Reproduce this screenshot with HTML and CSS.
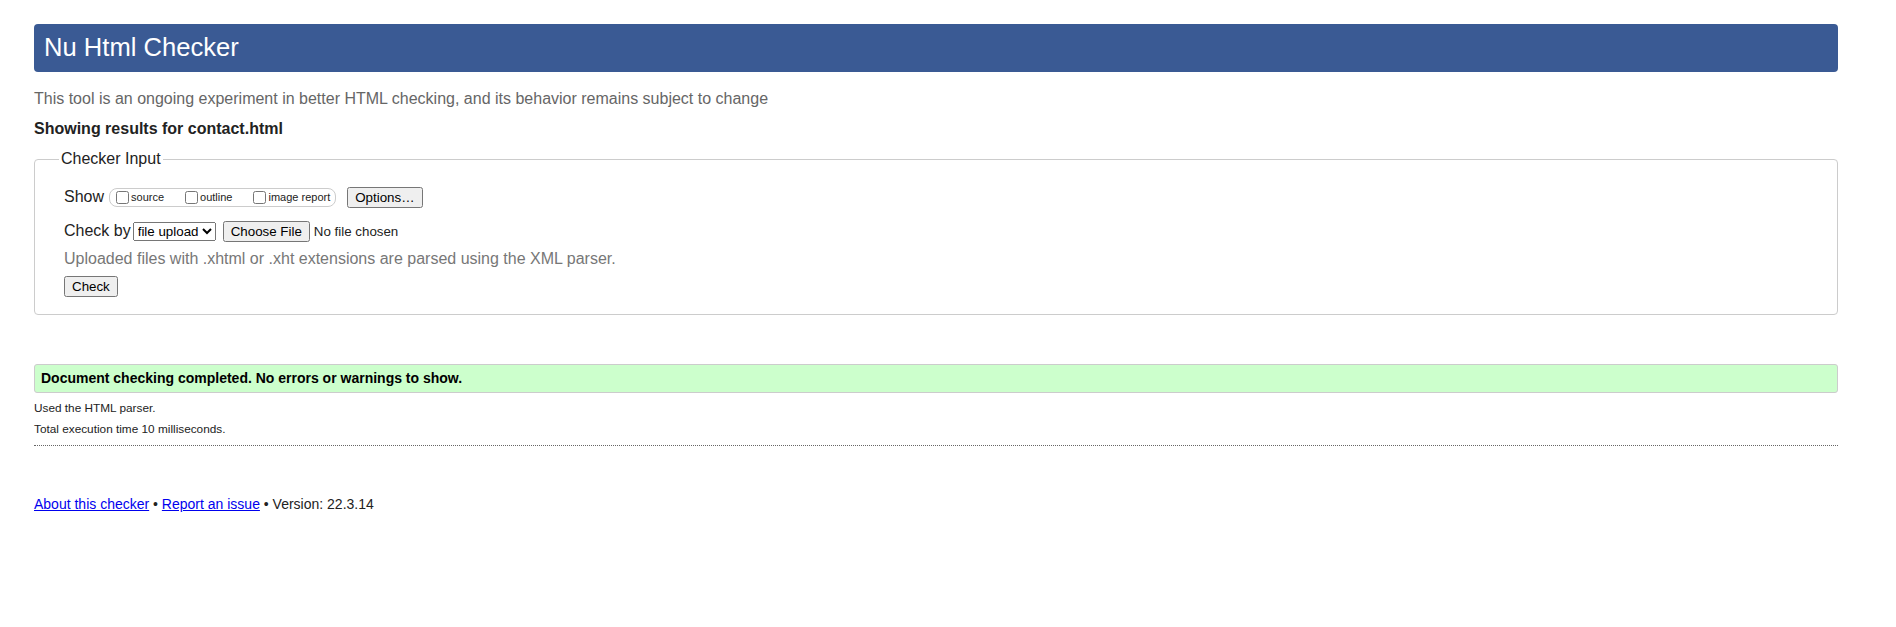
FILE: index.html
```html
<!DOCTYPE html>
<html lang="en">
<head>
<meta charset="utf-8">
<title>Showing results for contact.html - Nu Html Checker</title>
<link rel="stylesheet" href="styles.css">
</head>
<body>
<div class="page">
  <h1 class="title">Nu Html Checker</h1>
  <p class="tagline">This tool is an ongoing experiment in better HTML checking, and its behavior remains subject to change</p>
  <h2 class="results-for">Showing results for contact.html</h2>
  <fieldset class="checker-input">
    <legend class="legend">Checker Input</legend>
    <div class="inner">
      <div class="row show-row">
        <span class="row-label">Show</span>
        <span class="extras">
          <label class="extra"><input type="checkbox" class="cb">source</label>
          <label class="extra"><input type="checkbox" class="cb">outline</label>
          <label class="extra last"><input type="checkbox" class="cb">image report</label>
        </span>
        <button type="button" class="btn options">Options…</button>
      </div>
      <div class="row checkby-row">
        <span class="row-label">Check by</span>
        <select class="method"><option>file upload</option></select>
        <input type="file" class="file">
      </div>
      <p class="hint">Uploaded files with .xhtml or .xht extensions are parsed using the XML parser.</p>
      <div class="row submit-row">
        <button type="button" class="btn">Check</button>
      </div>
    </div>
  </fieldset>
  <div class="success">Document checking completed. No errors or warnings to show.</div>
  <p class="details first">Used the HTML parser.</p>
  <p class="details">Total execution time 10 milliseconds.</p>
  <hr class="divider">
  <p class="footer"><a href="#about" class="link">About this checker</a> • <a href="#issue" class="link">Report an issue</a> • Version: 22.3.14</p>
</div>
</body>
</html>
```

FILE: styles.css
```css
html {
  background: #fff;
}
body {
  margin: 0;
  font-family: "Liberation Sans", Arial, sans-serif;
  color: #222;
}
.page {
  padding: 24px 58px 0 34px;
}
.title {
  margin: 0;
  height: 48px;
  line-height: 46px;
  padding: 0 10px;
  font-size: 25.6px;
  font-weight: normal;
  color: #fff;
  background: #3a5a94;
  border-radius: 4px;
}
.tagline {
  margin: 15px 0 0;
  font-size: 16px;
  line-height: 24px;
  color: #666;
}
.results-for {
  margin: 6px 0 0;
  font-size: 16px;
  line-height: 24px;
  font-weight: bold;
  color: #222;
}
.checker-input {
  margin: 9px 0 0;
  padding: 14px 24px 17px;
  border: 1px solid #ccc;
  border-radius: 4px;
  min-width: 0;
}
.legend {
  padding: 0 2px;
  font-size: 16px;
  color: #222;
}
.inner {
  padding-left: 5px;
}
.row {
  display: flex;
  align-items: center;
}
.row-label {
  font-size: 16px;
  margin-right: 2px;
}
.show-row .row-label {
  margin-right: 5px;
}
.show-row {
  height: 30px;
}
.extras {
  display: inline-flex;
  align-items: center;
  height: 17px;
  border: 1px solid #ccc;
  border-radius: 8px;
  padding: 0 5px 0 4px;
  margin-right: 11px;
}
.extra {
  display: inline-flex;
  align-items: center;
  font-size: 11px;
  margin-right: 19px;
}
.extra.last {
  margin-right: 0;
}
.cb {
  margin: 0 2px 0 2px;
}
.btn {
  font-family: "Liberation Sans", Arial, sans-serif;
  font-size: 13.333px;
}
.checkby-row {
  height: 30px;
  margin-top: 4px;
}
.method {
  font-family: "Liberation Sans", Arial, sans-serif;
  font-size: 13.333px;
  margin-right: 7px;
}
.file {
  font-family: "Liberation Sans", Arial, sans-serif;
  font-size: 13.333px;
}
.hint {
  margin: 2px 0 0;
  font-size: 16px;
  line-height: 22px;
  color: #777;
}
.submit-row {
  margin-top: 6px;
}
.success {
  margin-top: 49px;
  height: 27px;
  line-height: 27px;
  padding: 0 6px;
  font-size: 14px;
  font-weight: bold;
  color: #000;
  background: #cfc;
  border: 1px solid #ccc;
  border-radius: 3px;
}
.details {
  margin: 0;
  font-size: 11.8px;
  line-height: 20.5px;
  color: #222;
}
.details.first {
  margin-top: 5px;
}
.divider {
  margin: 6px 0 0;
  height: 0;
  border: 0;
  border-top: 1px dotted #666;
}
.footer {
  margin: 48px 0 0;
  font-size: 14px;
  line-height: 20px;
  color: #222;
}
.link {
  color: #00e;
}
```
